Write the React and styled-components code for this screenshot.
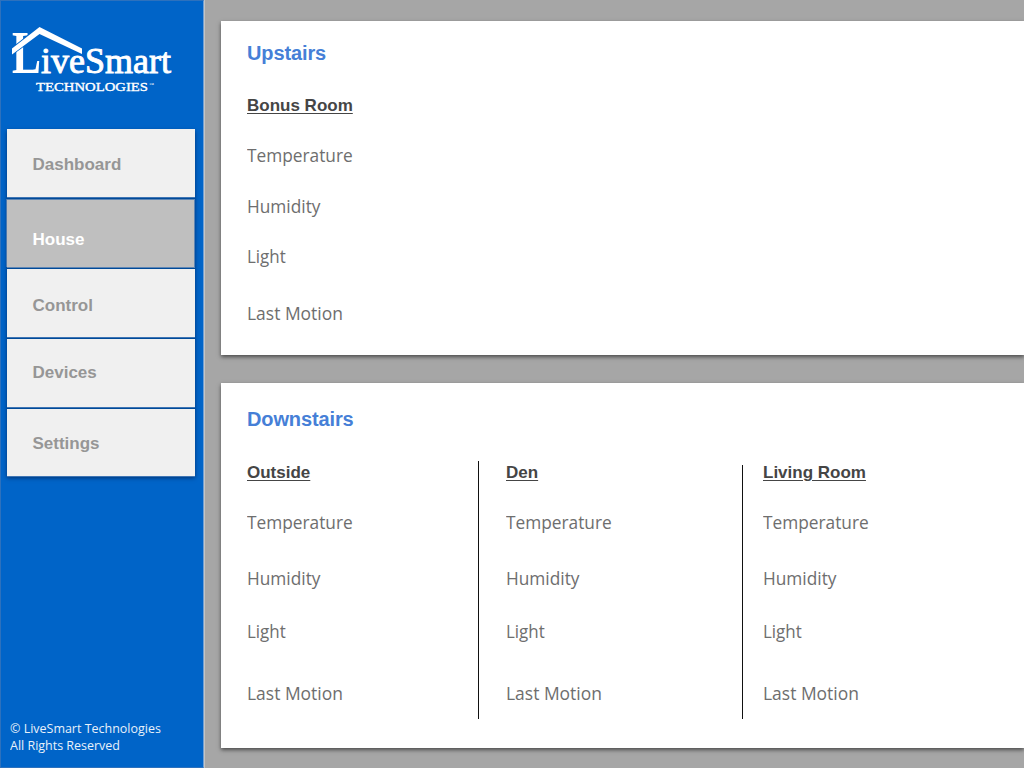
import React from 'react';
import styled, { createGlobalStyle } from 'styled-components';

const GlobalStyle = createGlobalStyle`
  * { box-sizing: border-box; }
  body { margin: 0; overflow: hidden; }
`;

const Screen = styled.div`
  display: flex;
  width: 1024px;
  height: 768px;
  overflow: hidden;
  background: #a6a6a6;
  font-family: 'Liberation Sans', Arial, sans-serif;
`;

const Sidebar = styled.aside`
  display: flex;
  flex-direction: column;
  flex: none;
  width: 204px;
  height: 768px;
  background: #0064c8;
  border: 1px solid #2d71bd;
  border-right-color: #6f9fd4;
  box-shadow: 1px 0 0 #c4c4c4;
`;

const Logo = styled.svg`
  display: block;
  flex: none;
  width: 202px;
  height: 128px;
`;

const Nav = styled.nav`
  display: flex;
  flex-direction: column;
  gap: 2px;
  width: 188px;
  margin-left: 6px;
  background: #004a98;
  box-shadow: 0 2px 4px rgba(0, 20, 60, 0.6);
`;

const NavItem = styled.a`
  height: ${(p) => p.$height || 68}px;
  padding: ${(p) => p.$top}px 0 0 25.5px;
  background: ${(p) => (p.$active ? '#bfbfbf' : '#f0f0f0')};
  box-shadow: ${(p) => (p.$active ? 'inset -1px 1px 0 #5f86b4, -1px 0 0 #4a78ae, 0 1px 0 #5f86b4' : '0 1px 0 #3f75b4')};
  color: ${(p) => (p.$active ? '#fff' : '#969696')};
  font-size: 17px;
  font-weight: bold;
  line-height: 20px;
`;

const Copyright = styled.footer`
  margin-top: auto;
  padding: 0 0 13px 9px;
  color: #e8f1fa;
  font: 13px/17px 'Open Sans', 'Noto Sans', sans-serif;
`;

const FooterLine = styled.div`
  width: max-content;
  transform: scaleX(${(p) => p.$fit});
  transform-origin: left;
`;

const Main = styled.main`
  flex: 1;
  display: flex;
  flex-direction: column;
  gap: 28px;
  padding: 21px 0 0 17px;
`;

const Panel = styled.section`
  height: ${(p) => p.$height}px;
  padding: ${(p) => p.$top}px 0 0 26px;
  background: #fff;
  box-shadow: 0 2px 4px rgba(0, 0, 0, 0.55);
`;

const Title = styled.h2`
  margin: 0;
  color: #467fd7;
  font-size: 20px;
  line-height: 24px;
  letter-spacing: -0.12px;
`;

const Rooms = styled.div`
  display: flex;
`;

const Room = styled.div`
  width: ${(p) => p.$width}px;
  padding-top: ${(p) => p.$top}px;
`;

const RoomName = styled.h3`
  margin: 0;
  color: #454545;
  font-size: 17px;
  line-height: 24px;
  text-decoration: underline;
  text-decoration-thickness: 1px;
  text-underline-offset: 2px;
`;

const Reading = styled.div`
  width: max-content;
  margin-top: ${(p) => p.$gap}px;
  color: #6e6e6e;
  font: 18px/24px 'Open Sans', 'Noto Sans', sans-serif;
  transform: scaleX(${(p) => p.$fit});
  transform-origin: left;
`;

const Divider = styled.div`
  width: 1px;
  height: ${(p) => p.$height}px;
  margin: ${(p) => p.$top}px ${(p) => p.$gap}px 0 0;
  background: #111;
`;

const navigation = [
  { label: 'Dashboard', top: 26 },
  { label: 'House', top: 31, active: true },
  { label: 'Control', top: 27 },
  { label: 'Devices', top: 24 },
  { label: 'Settings', top: 25, height: 67 },
];

const readings = [
  { label: 'Temperature', fit: 0.96 },
  { label: 'Humidity', fit: 0.96 },
  { label: 'Light', fit: 0.94 },
  { label: 'Last Motion', fit: 0.97 },
];

function RoomReadings({ name, gaps, width, top }) {
  return (
    <Room $width={width} $top={top}>
      <RoomName>{name}</RoomName>
      {readings.map((r, i) => (
        <Reading key={r.label} $gap={gaps[i]} $fit={r.fit}>{r.label}</Reading>
      ))}
    </Room>
  );
}

function LiveSmartLogo() {
  return (
    <Logo viewBox="1 1 202 128" role="img" aria-label="LiveSmart Technologies">
      <g fill="#fff" stroke="#fff" fontFamily="'Liberation Serif', serif">
        <text x="12" y="73" fontSize="62" fontWeight="bold" stroke="none" textLength="29" lengthAdjust="spacingAndGlyphs">L</text>
        <path d="M12 48.500L39.500 27L82 48.500V54L39.500 34L12 54.500Z" stroke="#0064c8" strokeWidth="1.6" paintOrder="stroke" />
        <text x="41" y="73" fontSize="36" strokeWidth="0.9" textLength="130" lengthAdjust="spacingAndGlyphs">iveSmart</text>
        <text x="36" y="91" fontSize="13.500" strokeWidth="0.35" textLength="112" lengthAdjust="spacingAndGlyphs">TECHNOLOGIES</text>
        <text x="149" y="86" fontSize="5" stroke="none">™</text>
      </g>
    </Logo>
  );
}

export default function App() {
  const lowerGaps = [25, 32, 29, 38];
  return (
    <Screen>
      <GlobalStyle />
      <Sidebar>
        <LiveSmartLogo />
        <Nav>
          {navigation.map((n) => (
            <NavItem key={n.label} $top={n.top} $height={n.height} $active={n.active}>{n.label}</NavItem>
          ))}
        </Nav>
        <Copyright>
          <FooterLine $fit={0.96}>© LiveSmart Technologies</FooterLine>
          <FooterLine $fit={0.96}>All Rights Reserved</FooterLine>
        </Copyright>
      </Sidebar>
      <Main>
        <Panel $height={334} $top={20}>
          <Title>Upstairs</Title>
          <Rooms>
            <RoomReadings name="Bonus Room" width={232} top={29} gaps={[25, 27, 26, 33]} />
          </Rooms>
        </Panel>
        <Panel $height={365} $top={24}>
          <Title>Downstairs</Title>
          <Rooms>
            <RoomReadings name="Outside" width={231} top={30} gaps={lowerGaps} />
            <Divider $height={258} $top={30} $gap={27} />
            <RoomReadings name="Den" width={236} top={30} gaps={lowerGaps} />
            <Divider $height={254} $top={34} $gap={20} />
            <RoomReadings name="Living Room" width={240} top={30} gaps={lowerGaps} />
          </Rooms>
        </Panel>
      </Main>
    </Screen>
  );
}
